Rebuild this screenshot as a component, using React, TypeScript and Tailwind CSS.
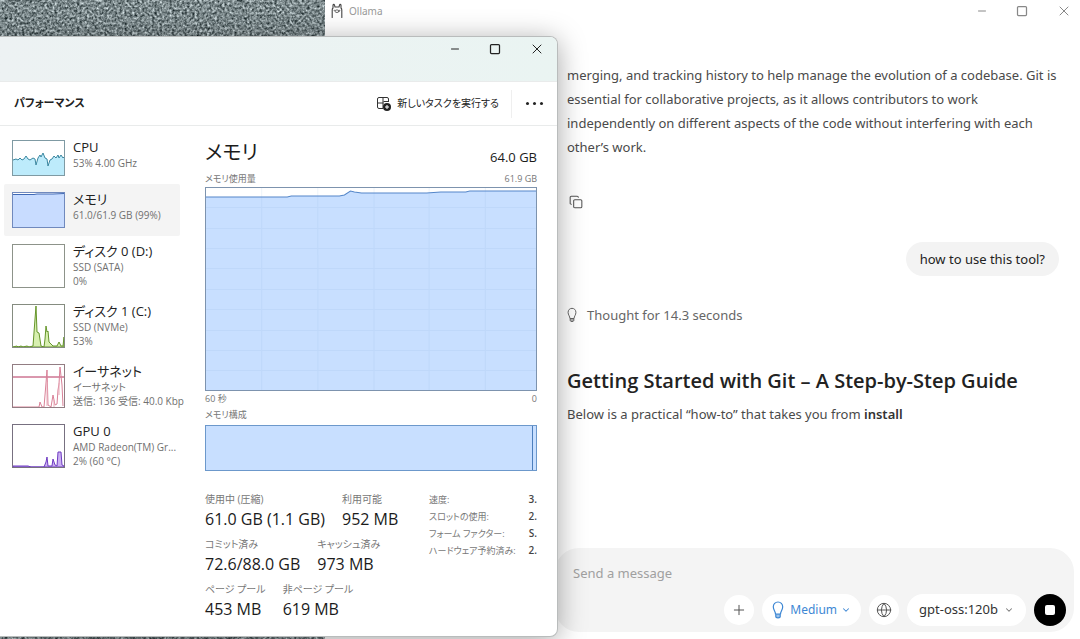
import type { ReactNode } from 'react';
import { clsx } from 'clsx';
import { ChevronDown, Copy, Globe, Minus, Plus, Square, X } from 'lucide-react';

interface Resource {
  name: string;
  details: string[];
  tall?: boolean;
  active?: boolean;
  border: string;
  chart?: ReactNode;
}

const resources: Resource[] = [
  {
    name: 'CPU',
    details: ['53% 4.00 GHz'],
    border: 'border-[#7f9aa3]',
    chart: (
      <>
        <path
          d="M0 34V19L3 18L5 19L7 17L9 19L11 18L13 15L15 18L17 19L20 17L22 18L23 24L25 17L27 14L28 16L30 12L32 17L34 18L35 25L37 19L39 18L41 15L43 17L45 14L46 17L48 14L50 17L51 16V34Z"
          fill="#bdebfb"
        />
        <path
          d="M0 19L3 18L5 19L7 17L9 19L11 18L13 15L15 18L17 19L20 17L22 18L23 24L25 17L27 14L28 16L30 12L32 17L34 18L35 25L37 19L39 18L41 15L43 17L45 14L46 17L48 14L50 17L51 16"
          fill="none"
          stroke="#3b87a0"
        />
      </>
    ),
  },
  {
    name: 'メモリ',
    details: ['61.0/61.9 GB (99%)'],
    active: true,
    border: 'border-[#7089bd]',
    chart: (
      <>
        <path d="M0 34V1H51V34Z" fill="#c8dcff" />
        <path d="M0 1.500H21L24 1L40 1L51 .5" fill="none" stroke="#4069b5" />
      </>
    ),
  },
  {
    name: 'ディスク 0 (D:)',
    details: ['SSD (SATA)', '0%'],
    tall: true,
    border: 'border-[#8d938a]',
  },
  {
    name: 'ディスク 1 (C:)',
    details: ['SSD (NVMe)', '53%'],
    tall: true,
    border: 'border-[#858c80]',
    chart: (
      <path
        d="M0 42L4 41L5 42L8 41L10 42L14 41L16 42L20 41L22 14L23 1L24 27L26 28L28 41L31 42L32 34L33 21L34 27L35 26L36 37L38 39L40 41L44 41L46 37L48 41H50L51 32V42Z"
        fill="#d8f0b0"
        stroke="#65952a"
      />
    ),
  },
  {
    name: 'イーサネット',
    details: ['イーサネット', '送信: 136 受信: 40.0 Kbp'],
    tall: true,
    border: 'border-[#927d83]',
    chart: (
      <>
        <path d="M0 12H51" stroke="#b5315c" />
        <path
          d="M0 42H26L27 37L29 42H31L33 18L34 5L35 40L38 42L40 30L42 40L44 39L45 25L46 19L47 2L49 20L50 41"
          fill="none"
          stroke="#d98097"
        />
        <path d="M34 17V41M41 35V42M46 18V30" stroke="#e8a9b7" />
      </>
    ),
  },
  {
    name: 'GPU 0',
    details: ['AMD Radeon(TM) Gr...', '2% (60 °C)'],
    tall: true,
    border: 'border-[#777080]',
    chart: (
      <path
        d="M0 41H15L18 42H31L33 37L34 32L35 41H39L40 34L42 40L44 41L45 27H48L49 40L51 41V42H0Z"
        fill="#cbb0f2"
        stroke="#6f3cc2"
      />
    ),
  },
];

const stats = [
  [
    { label: '使用中 (圧縮)', value: '61.0 GB (1.1 GB)' },
    { label: '利用可能', value: '952 MB' },
  ],
  [
    { label: 'コミット済み', value: '72.6/88.0 GB' },
    { label: 'キャッシュ済み', value: '973 MB' },
  ],
  [
    { label: 'ページ プール', value: '453 MB' },
    { label: '非ページ プール', value: '619 MB' },
  ],
];

const hardware = [
  { label: '速度:', value: '3.' },
  { label: 'スロットの使用:', value: '2.' },
  { label: 'フォーム ファクター:', value: 'S.' },
  { label: 'ハードウェア予約済み:', value: '2.' },
];

function Wallpaper() {
  return (
    <svg className="absolute inset-0 h-full w-full bg-[#78878a]" aria-hidden="true">
      <filter id="grain" x="0" y="0" width="100%" height="100%" colorInterpolationFilters="sRGB">
        <feTurbulence type="fractalNoise" baseFrequency="0.4" numOctaves="2" seed="8" />
        <feColorMatrix
          values="0.9 0.5 0 0 -0.22
                  0.9 0.5 0 0 -0.17
                  0.9 0.5 0 0 -0.16
                  0 0 0 0 1"
        />
      </filter>
      <rect width="100%" height="100%" filter="url(#grain)" />
    </svg>
  );
}

function OllamaLogo() {
  return (
    <svg
      viewBox="0 0 12 16"
      className="h-4 w-3 shrink-0"
      fill="none"
      stroke="#444"
      strokeWidth="1.1"
      strokeLinecap="round"
      strokeLinejoin="round"
      aria-hidden="true"
    >
      <path d="M1.200 14.500V7C1.200 6 1.500 5.500 2 5V2.200C2.300.8 3.500 1.200 3.700 2.800L4 4H8L8.300 2.800C8.500 1.200 9.700.8 10 2.200V5C10.500 5.500 10.800 6 10.800 7V14.500" />
      <ellipse cx="6" cy="8.200" rx="2" ry="1.300" strokeWidth=".8" />
      <path d="M3.200 7.200H3.300M8.700 7.200H8.800" />
    </svg>
  );
}

function Bulb({ className }: { className?: string }) {
  return (
    <svg
      viewBox="0 0 12 18"
      className={clsx('shrink-0', className)}
      fill="none"
      stroke="currentColor"
      strokeWidth="1.2"
      strokeLinejoin="round"
      aria-hidden="true"
    >
      <path d="M3.500 13.200C3.500 10.500 1.300 9 1.300 5.800C1.300 3 3.300 1 6 1C8.700 1 10.700 3 10.700 5.800C10.700 9 8.500 10.500 8.500 13.200Z" />
      <path d="M3.800 13.500V15.500C3.800 17.300 8.200 17.300 8.200 15.500V13.500" fill="currentColor" fillOpacity=".5" />
    </svg>
  );
}

function NewTaskIcon() {
  return (
    <svg viewBox="0 0 14 14" className="h-3.5 w-3.5 shrink-0" fill="none" stroke="#333" aria-hidden="true">
      <path d="M6 11.500H2A1.500 1.500 0 0 1 .5 10V2A1.500 1.500 0 0 1 2 .5H10A1.500 1.500 0 0 1 11.500 2V5M.5 6H6.500M6 .5V11.500M6.500 4.500H11.500" />
      <circle cx="10" cy="10" r="4" fill="#222" stroke="none" />
      <path d="M10 8V12M8 10H12" stroke="#fff" />
    </svg>
  );
}

function WindowControls({ className }: { className: string }) {
  return (
    <div className={clsx('flex items-center gap-7', className)}>
      <button type="button" aria-label="Minimize">
        <Minus className="h-3 w-3" strokeWidth={2} />
      </button>
      <button type="button" aria-label="Maximize">
        <Square className="h-3 w-3" strokeWidth={2.5} />
      </button>
      <button type="button" aria-label="Close">
        <X className="h-4 w-4" strokeWidth={1.5} />
      </button>
    </div>
  );
}

function ResourceItem({ resource }: { resource: Resource }) {
  return (
    <li>
      <button
        type="button"
        className={clsx(
          'flex w-full items-start gap-2 rounded-xs pt-1.5 pl-2 text-left whitespace-nowrap',
          resource.tall ? 'h-15' : 'h-13',
          resource.active && 'bg-[#f4f4f4]',
        )}
      >
        <span className={clsx('mt-0.5 w-[53px] shrink-0 border bg-white', resource.tall ? 'h-11' : 'h-9', resource.border)}>
          <svg
            viewBox={resource.tall ? '0 0 51 42' : '0 0 51 34'}
            className="block h-full w-full"
            preserveAspectRatio="none"
            aria-hidden="true"
          >
            {resource.chart}
          </svg>
        </span>
        <span className="flex flex-col">
          <span className="text-[13px] leading-[18px] text-[#222]">{resource.name}</span>
          {resource.details.map((detail) => (
            <span key={detail} className="text-[10px] leading-[14px] text-[#707070]">
              {detail}
            </span>
          ))}
        </span>
      </button>
    </li>
  );
}

function MemoryGraph() {
  return (
    <svg
      viewBox="0 0 331 204"
      className="block h-[204px] w-full"
      preserveAspectRatio="none"
      role="img"
      aria-label="メモリ使用量"
    >
      <path d="M0 10H82L86 9H134L139 8L145 4L149 5L156 6H221L235 5H260L264 4H331V204H0Z" fill="#c8dfff" />
      <path
        d="M56.500 0V204M112.500 0V204M168.500 0V204M223.500 0V204M279.500 0V204M0 20.500H331M0 41.500H331M0 61.500H331M0 81.500H331M0 102.500H331M0 122.500H331M0 143.500H331M0 163.500H331M0 183.500H331"
        stroke="#8fb2df"
        strokeOpacity=".15"
      />
      <path
        d="M0 10H82L86 9H134L139 8L145 4L149 5L156 6H221L235 5H260L264 4H331"
        fill="none"
        stroke="#5486c9"
      />
      <rect x=".5" y=".5" width="330" height="203" fill="none" stroke="#7d93ae" />
    </svg>
  );
}

function TaskManager() {
  return (
    <section className="absolute top-9 bottom-0.5 left-0 flex w-[558px] flex-col overflow-hidden rounded-r-lg border border-l-0 border-[#b9bcbc] bg-white font-['Open_Sans','Noto_Sans_CJK_JP',sans-serif] shadow-[0_4px_28px_rgba(0,0,0,0.35)] [font-feature-settings:'palt']">
      <header className="flex h-11 shrink-0 items-start justify-end bg-linear-to-r from-[#edf2f3] to-[#eaf4f2] pt-1">
        <WindowControls className="mr-3 text-[#222]" />
      </header>
      <div className="flex h-[45px] shrink-0 items-center border-t border-b border-[#e9ebeb] pl-3.5">
        <h1 className="text-[11px] font-semibold text-[#222]">パフォーマンス</h1>
        <button type="button" className="ml-auto flex items-center gap-1.5 pr-3 text-[10px] text-[#222]">
          <NewTaskIcon />
          新しいタスクを実行する
        </button>
        <button type="button" aria-label="その他" className="flex h-7 items-center gap-1 border-l border-[#efefef] px-3.5">
          <span className="h-[3px] w-[3px] rounded-full bg-[#222]" />
          <span className="h-[3px] w-[3px] rounded-full bg-[#222]" />
          <span className="h-[3px] w-[3px] rounded-full bg-[#222]" />
        </button>
      </div>

      <div className="flex min-h-0 flex-1">
        <ul className="w-[180px] shrink-0 pt-1.5 pl-1">
          {resources.map((resource) => (
            <ResourceItem key={resource.name} resource={resource} />
          ))}
        </ul>

        <div className="min-w-0 flex-1 pr-5 pl-[25px] text-[9px] leading-4 text-[#777]">
          <div className="flex h-[45px] items-end justify-between text-[#1b1b1b]">
            <h2 className="text-[20px] leading-9">メモリ</h2>
            <span className="text-[13px] leading-7">64.0 GB</span>
          </div>
          <div className="flex justify-between">
            <span>メモリ使用量</span>
            <span>61.9 GB</span>
          </div>
          <MemoryGraph />
          <div className="flex justify-between">
            <span>60 秒</span>
            <span>0</span>
          </div>
          <p>メモリ構成</p>
          <div className="mt-0.5 flex h-[46px] border border-[#6c98cb] bg-[#c8dfff]">
            <div className="ml-auto w-1 border-l border-[#4d7fbd]" />
          </div>

          <div className="mt-5 flex justify-between">
            <div className="flex flex-col gap-[5px]">
              {stats.map((row) => (
                <dl key={row[0].label} className="flex gap-[17px] whitespace-nowrap">
                  {row.map((stat) => (
                    <div key={stat.label}>
                      <dt className="text-[10px] leading-4">{stat.label}</dt>
                      <dd className="text-[16px] leading-6 text-[#1b1b1b]">{stat.value}</dd>
                    </div>
                  ))}
                </dl>
              ))}
            </div>
            <table className="w-[108px] self-start whitespace-nowrap">
              <tbody>
                {hardware.map((item) => (
                  <tr key={item.label}>
                    <th scope="row" className="p-0 text-left leading-[17px] font-normal">
                      {item.label}
                    </th>
                    <td className="p-0 text-right text-[10px] leading-[17px] font-semibold text-[#444]">{item.value}</td>
                  </tr>
                ))}
              </tbody>
            </table>
          </div>
        </div>
      </div>
    </section>
  );
}

function Composer() {
  return (
    <form className="mr-1.5 mb-[7px] ml-[230px] flex h-21 flex-col justify-between rounded-3xl bg-[#f4f4f4] pt-[13px] pr-2 pb-1.5 pl-[18px]">
      <input
        type="text"
        aria-label="Send a message"
        placeholder="Send a message"
        className="w-full bg-transparent text-[13px] leading-6 outline-none placeholder:text-[#a0a0a0]"
      />
      <div className="flex items-center justify-end gap-2 text-[12px] text-[#555]">
        <button
          type="button"
          aria-label="Add"
          className="flex h-[30px] w-[30px] items-center justify-center rounded-full bg-white"
        >
          <Plus className="h-4 w-4" strokeWidth={1.5} />
        </button>
        <button type="button" className="flex h-8 items-center gap-1.5 rounded-full bg-white px-2.5 text-[#3d87d4]">
          <Bulb className="h-[18px] w-3" />
          <span className="flex items-center gap-1">
            Medium
            <ChevronDown className="h-2.5 w-2.5" strokeWidth={2.5} />
          </span>
        </button>
        <button
          type="button"
          aria-label="Web search"
          className="flex h-[30px] w-[30px] items-center justify-center rounded-full bg-white"
        >
          <Globe className="h-4 w-4" strokeWidth={1.5} />
        </button>
        <button type="button" className="flex h-8 items-center gap-1.5 rounded-full bg-white px-3 text-[13px] text-[#333]">
          gpt-oss:120b
          <ChevronDown className="h-2.5 w-2.5 text-[#777]" strokeWidth={2.5} />
        </button>
        <button type="button" aria-label="Stop" className="flex h-8 w-8 items-center justify-center rounded-full bg-black">
          <span className="h-2.5 w-2.5 rounded-xs bg-white" />
        </button>
      </div>
    </form>
  );
}

function OllamaWindow() {
  return (
    <section className="absolute inset-y-0 right-0 left-[325px] flex flex-col bg-white font-['Noto_Sans','Open_Sans',sans-serif]">
      <header className="flex h-[22px] shrink-0 items-center gap-1.5 pl-1.5 text-[10px] text-[#999]">
        <OllamaLogo />
        <span>Ollama</span>
        <WindowControls className="mr-2 ml-auto text-[#888]" />
      </header>

      <main className="flex-1 overflow-hidden pt-[41px] pr-[21px] pl-[242px] text-[13px] leading-6 text-[#4a4a4a]">
        <p>
          merging, and tracking history to help manage the evolution of a codebase. Git is essential for collaborative
          projects, as it allows contributors to work independently on different aspects of the code without interfering
          with each other’s work.
        </p>
        <button type="button" aria-label="Copy" className="mt-9 ml-0.5 block text-[#555]">
          <Copy className="h-3.5 w-3.5" strokeWidth={1.8} />
        </button>
        <div className="mt-[33px] flex justify-end">
          <p className="rounded-full bg-[#f3f3f3] px-3.5 py-[5px] text-[#222]">how to use this tool?</p>
        </div>
        <div className="mt-[27px] flex items-center gap-2.5 text-[#666]">
          <Bulb className="h-[18px] w-2.5" />
          <span>Thought for 14.3 seconds</span>
        </div>
        <h2 className="mt-10 font-['Open_Sans'] text-[20px] leading-7 font-semibold text-[#222]">
          Getting Started with Git – A Step-by-Step Guide
        </h2>
        <p className="mt-[7px]">
          Below is a practical “how-to” that takes you from <strong className="font-semibold text-[#333]">install</strong>
        </p>
      </main>

      <Composer />
    </section>
  );
}

export default function App() {
  return (
    <div className="relative h-screen w-full overflow-hidden">
      <Wallpaper />
      <OllamaWindow />
      <TaskManager />
    </div>
  );
}
